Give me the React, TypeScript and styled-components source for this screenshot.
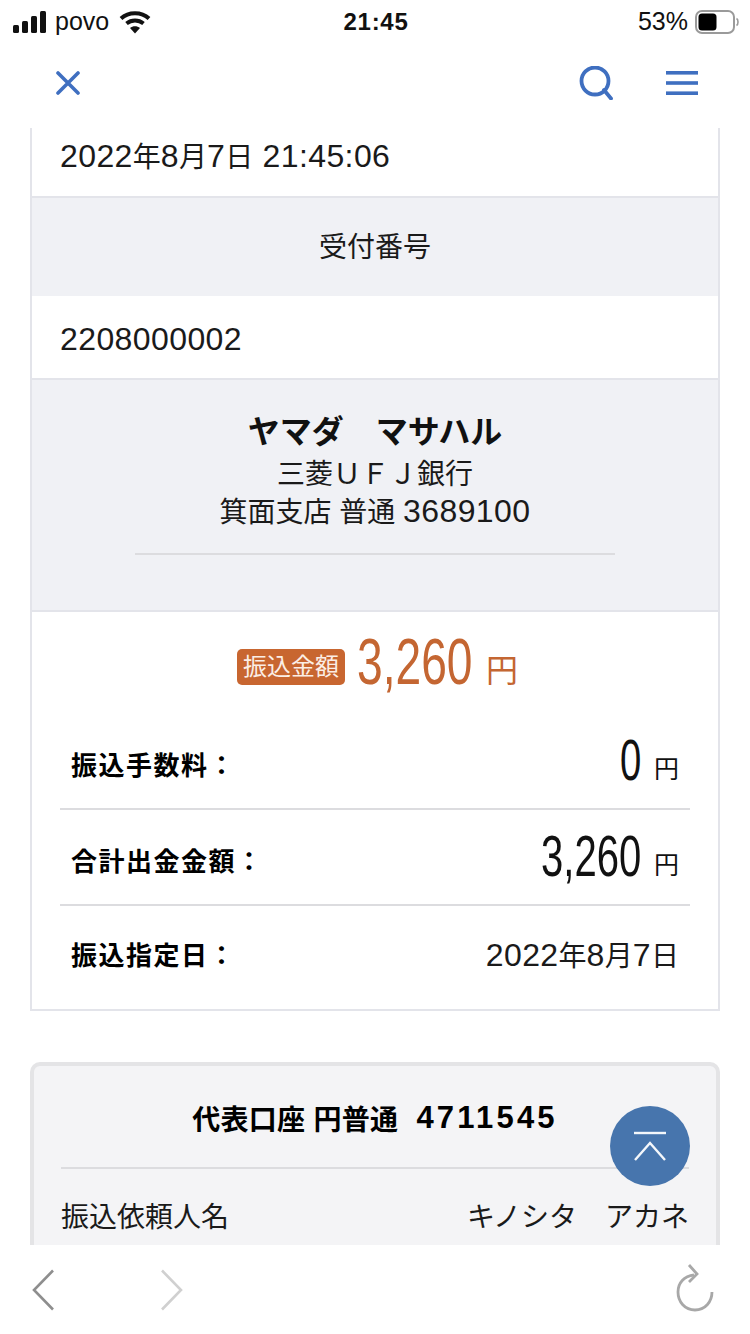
import styled, { createGlobalStyle } from 'styled-components';

const GlobalStyle = createGlobalStyle`
  html, body {
    margin: 0;
    padding: 0;
    background: #ffffff;
  }

  * {
    box-sizing: border-box;
  }

  body {
    font-family: 'Liberation Sans', 'Noto Sans CJK JP', sans-serif;
    color: #1a1a1a;
  }
`;

const Page = styled.div`
  position: relative;
  width: 750px;
  height: 1334px;
  overflow: hidden;
  display: flex;
  flex-direction: column;
`;

const StatusBar = styled.div`
  height: 46px;
  padding: 0 11px 3px 13px;
  display: grid;
  grid-template-columns: 1fr auto 1fr;
  align-items: center;
  font-size: 25px;
  color: #111111;
`;

const StatusLeft = styled.div`
  display: flex;
  align-items: center;
  gap: 8px;
`;

const WifiIcon = styled.svg`
  margin-left: 2px;
`;

const StatusTime = styled.div`
  font-weight: 700;
  font-size: 24px;
  letter-spacing: 0.7px;
`;

const StatusRight = styled.div`
  display: flex;
  align-items: center;
  justify-content: flex-end;
  gap: 7px;
`;

const Header = styled.header`
  height: 82px;
  padding: 0 52px 8px 56px;
  display: flex;
  align-items: center;
  justify-content: space-between;
`;

const HeaderActions = styled.div`
  display: flex;
  align-items: center;
  gap: 53px;
`;

const Main = styled.main`
  flex: 1;
  min-height: 0;
  overflow: hidden;
  padding: 0 30px;
`;

const Panel = styled.section`
  border: 2px solid #e3e4ea;
  border-top: 0;
  background: #ffffff;
`;

const ValueRow = styled.div<{ $height: number; $top: number; $bottom: number }>`
  height: ${(p) => p.$height}px;
  padding: ${(p) => p.$top}px 0 ${(p) => p.$bottom}px 28px;
  display: flex;
  align-items: center;
  border-bottom: 2px solid #e3e4ea;
`;

// latin digits run larger than the kanji next to them in the reference
const Mixed = styled.span`
  font-size: 32px;
  letter-spacing: 0.4px;
  white-space: nowrap;
`;

const Kanji = styled.span`
  font-size: 28px;
  letter-spacing: 0;
`;

const LabelRow = styled.div`
  height: 98px;
  background: #f0f1f5;
  display: flex;
  align-items: center;
  justify-content: center;
  padding-bottom: 4px;
  font-size: 28px;
`;

const Payee = styled.div`
  height: 232px;
  padding-top: 30px;
  background: #f0f1f5;
  border-bottom: 2px solid #e3e4ea;
  text-align: center;
`;

const PayeeName = styled.div`
  font-size: 32px;
  line-height: 44px;
  margin-bottom: 2px;
  font-weight: 700;
  color: #111111;
`;

const PayeeLine = styled.div`
  font-size: 28px;
  line-height: 37px;
`;

const PayeeRule = styled.div`
  width: 480px;
  height: 2px;
  margin: 22px auto 0;
  background: #dcdcdf;
`;

const Amounts = styled.div`
  padding: 0 28px;
`;

const TotalLine = styled.div`
  height: 112px;
  padding: 0 0 8px 5px;
  display: flex;
  align-items: center;
  justify-content: center;
  color: #c46632;
`;

const TotalBadge = styled.span`
  width: 108px;
  height: 36px;
  margin: 6px 12px 0 0;
  border-radius: 5px;
  background: #c86630;
  color: #fbeee6;
  font-size: 24px;
  line-height: 36px;
  text-align: center;
  white-space: nowrap;
`;

// no condensed face is installed, so the digits are squeezed; $width is the space left for them
const Digits = styled.span<{ $size: number; $width: number; $scale: number }>`
  display: inline-block;
  width: ${(p) => p.$width}px;
  margin-bottom: 6px;
  font-size: ${(p) => p.$size}px;
  line-height: 1;
  font-weight: 400;
  white-space: nowrap;
  transform: scaleX(${(p) => p.$scale});
  transform-origin: left center;
`;

const TotalYen = styled.span`
  font-size: 32px;
  margin-left: 14px;
  margin-top: 8px;
`;

const AmountRow = styled.div<{ $last?: boolean; $height: number; $top?: number; $bottom?: number }>`
  height: ${(p) => p.$height}px;
  padding: ${(p) => p.$top ?? 0}px 11px ${(p) => p.$bottom ?? 0}px;
  display: flex;
  align-items: center;
  justify-content: space-between;
  border-bottom: ${(p) => (p.$last ? '0' : '2px solid #dcdcdf')};
`;

const AmountLabel = styled.div`
  font-size: 26px;
  font-weight: 700;
  letter-spacing: 1.5px;
  color: #000000;
`;

const AmountValue = styled.div`
  display: flex;
  align-items: center;
  color: #111111;
`;

const RowYen = styled.span`
  font-size: 25px;
  margin-left: 13px;
  margin-top: 8px;
`;

const AccountCard = styled.section`
  margin-top: 51px;
  height: 300px;
  padding: 0 27px;
  background: #f4f4f6;
  border: 4px solid #e4e4e6;
  border-bottom: 0;
  border-radius: 10px 10px 0 0;
`;

const AccountTitle = styled.div`
  height: 103px;
  padding-top: 3px;
  display: flex;
  align-items: center;
  justify-content: center;
  gap: 18px;
  font-size: 28px;
  letter-spacing: 0.3px;
  font-weight: 700;
  color: #000000;
  border-bottom: 2px solid #dcdcdf;
`;

const AccountNumber = styled.span`
  font-size: 31px;
  letter-spacing: 3.2px;
`;

const AccountRow = styled.div`
  height: 92px;
  display: flex;
  align-items: center;
  justify-content: space-between;
  font-size: 28px;
  white-space: nowrap;
`;

const Toolbar = styled.footer`
  height: 89px;
  padding: 0 36px 0 31px;
  background: #ffffff;
  display: flex;
  align-items: center;
  justify-content: space-between;
`;

const ToolbarGroup = styled.div`
  display: flex;
  align-items: center;
  gap: 105px;
`;

const ReloadIcon = styled.svg`
  margin-bottom: 4px;
`;

const ScrollTop = styled.button`
  position: absolute;
  left: 610px;
  top: 1106px;
  width: 80px;
  height: 80px;
  padding: 0;
  border: 0;
  border-radius: 50%;
  background: #4775ad;
  display: flex;
  align-items: center;
  justify-content: center;
`;

const App = () => {
  return (
    <Page>
      <GlobalStyle />
      <StatusBar>
        <StatusLeft>
          <svg width="34" height="22" viewBox="0 0 34 22" fill="#111111">
            <rect x="0" y="14" width="6" height="8" rx="1.5" />
            <rect x="9" y="10" width="6" height="12" rx="1.5" />
            <rect x="18" y="5" width="6" height="17" rx="1.5" />
            <rect x="27" y="0" width="6" height="22" rx="1.5" />
          </svg>
          povo
          <WifiIcon width="32" height="24" viewBox="0 0 32 24" fill="none" stroke="#111111" strokeWidth="4">
            <path d="M2 8.5C9.5 1.5 22.5 1.5 30 8.5" />
            <path d="M7.5 13.5C12.5 9.5 19.5 9.5 24.5 13.5" />
            <path d="M16 23.5L11 18C13.8 15.8 18.2 15.8 21 18Z" fill="#111111" stroke="none" />
          </WifiIcon>
        </StatusLeft>
        <StatusTime>21:45</StatusTime>
        <StatusRight>
          53%
          <svg width="44" height="24" viewBox="0 0 44 24">
            <rect x="1" y="1" width="38" height="22" rx="6" fill="none" stroke="#9a9a9a" strokeWidth="2" />
            <rect x="3.5" y="3.5" width="18" height="17" rx="3.5" fill="#000000" />
            <path d="M41.5 8.5C43.5 9.5 43.5 14.5 41.5 15.5" fill="none" stroke="#9a9a9a" strokeWidth="1.6" />
          </svg>
        </StatusRight>
      </StatusBar>

      <Header>
        <svg width="24" height="24" viewBox="0 0 24 24" stroke="#3f6fc0" strokeWidth="3.6" strokeLinecap="round">
          <path d="M2 2L22 22M22 2L2 22" />
        </svg>
        <HeaderActions>
          <svg width="34" height="34" viewBox="0 0 34 34" fill="none" stroke="#3f6fc0" strokeWidth="3.8" strokeLinecap="round">
            <circle cx="16" cy="15" r="13.5" />
            <path d="M25 24L32 32.5" />
          </svg>
          <svg width="32" height="24" viewBox="0 0 32 24" fill="#3f6fc0">
            <rect x="0" y="0" width="32" height="3.6" />
            <rect x="0" y="10.2" width="32" height="3.6" />
            <rect x="0" y="20.4" width="32" height="3.6" />
          </svg>
        </HeaderActions>
      </Header>

      <Main>
        <Panel>
          <ValueRow $height={70} $top={0} $bottom={14}>
            <Mixed>
              2022<Kanji>年</Kanji>8<Kanji>月</Kanji>7<Kanji>日</Kanji> 21:45:06
            </Mixed>
          </ValueRow>
          <LabelRow>受付番号</LabelRow>
          <ValueRow $height={84} $top={4} $bottom={0}>
            <Mixed>2208000002</Mixed>
          </ValueRow>
          <Payee>
            <PayeeName>ヤマダ　マサハル</PayeeName>
            <PayeeLine>三菱ＵＦＪ銀行</PayeeLine>
            <PayeeLine>
              箕面支店 普通 <Mixed>3689100</Mixed>
            </PayeeLine>
            <PayeeRule />
          </Payee>
          <Amounts>
            <TotalLine>
              <TotalBadge>振込金額</TotalBadge>
              <Digits $size={65} $width={115} $scale={0.71}>3,260</Digits>
              <TotalYen>円</TotalYen>
            </TotalLine>
            <AmountRow $height={86} $bottom={6}>
              <AmountLabel>振込手数料：</AmountLabel>
              <AmountValue>
                <Digits $size={58} $width={21} $scale={0.66}>0</Digits>
                <RowYen>円</RowYen>
              </AmountValue>
            </AmountRow>
            <AmountRow $height={96} $top={4}>
              <AmountLabel>合計出金金額：</AmountLabel>
              <AmountValue>
                <Digits $size={58} $width={100} $scale={0.69}>3,260</Digits>
                <RowYen>円</RowYen>
              </AmountValue>
            </AmountRow>
            <AmountRow $last $height={103} $bottom={8}>
              <AmountLabel>振込指定日：</AmountLabel>
              <Mixed>
                2022<Kanji>年</Kanji>8<Kanji>月</Kanji>7<Kanji>日</Kanji>
              </Mixed>
            </AmountRow>
          </Amounts>
        </Panel>

        <AccountCard>
          <AccountTitle>
            代表口座 円普通
            <AccountNumber>4711545</AccountNumber>
          </AccountTitle>
          <AccountRow>
            <span>振込依頼人名</span>
            <span>キノシタ　アカネ</span>
          </AccountRow>
        </AccountCard>
      </Main>

      <Toolbar>
        <ToolbarGroup>
          <svg width="24" height="42" viewBox="0 0 24 42" fill="none" stroke="#8e8e8e" strokeWidth="2.6">
            <path d="M22 1.5L3 21L22 40.5" />
          </svg>
          <svg width="24" height="42" viewBox="0 0 24 42" fill="none" stroke="#d0d0d0" strokeWidth="2.6">
            <path d="M2 1.5L21 21L2 40.5" />
          </svg>
        </ToolbarGroup>
        <ReloadIcon width="38" height="48" viewBox="0 0 38 48" fill="none" stroke="#a8a8a8" strokeWidth="2.8">
          <path d="M18 11C8 12 2 19 2 28C2 38 9 46 19 46C29 46 36 38 36 28" />
          <path d="M13 1L21 10L13 18" />
        </ReloadIcon>
      </Toolbar>

      <ScrollTop aria-label="ページ上部へ">
        <svg width="34" height="30" viewBox="0 0 34 30" fill="none" stroke="#f4f7fb" strokeWidth="2.4">
          <path d="M1 2H33" />
          <path d="M2 29L17 12L32 29" />
        </svg>
      </ScrollTop>
    </Page>
  );
};

export default App;
